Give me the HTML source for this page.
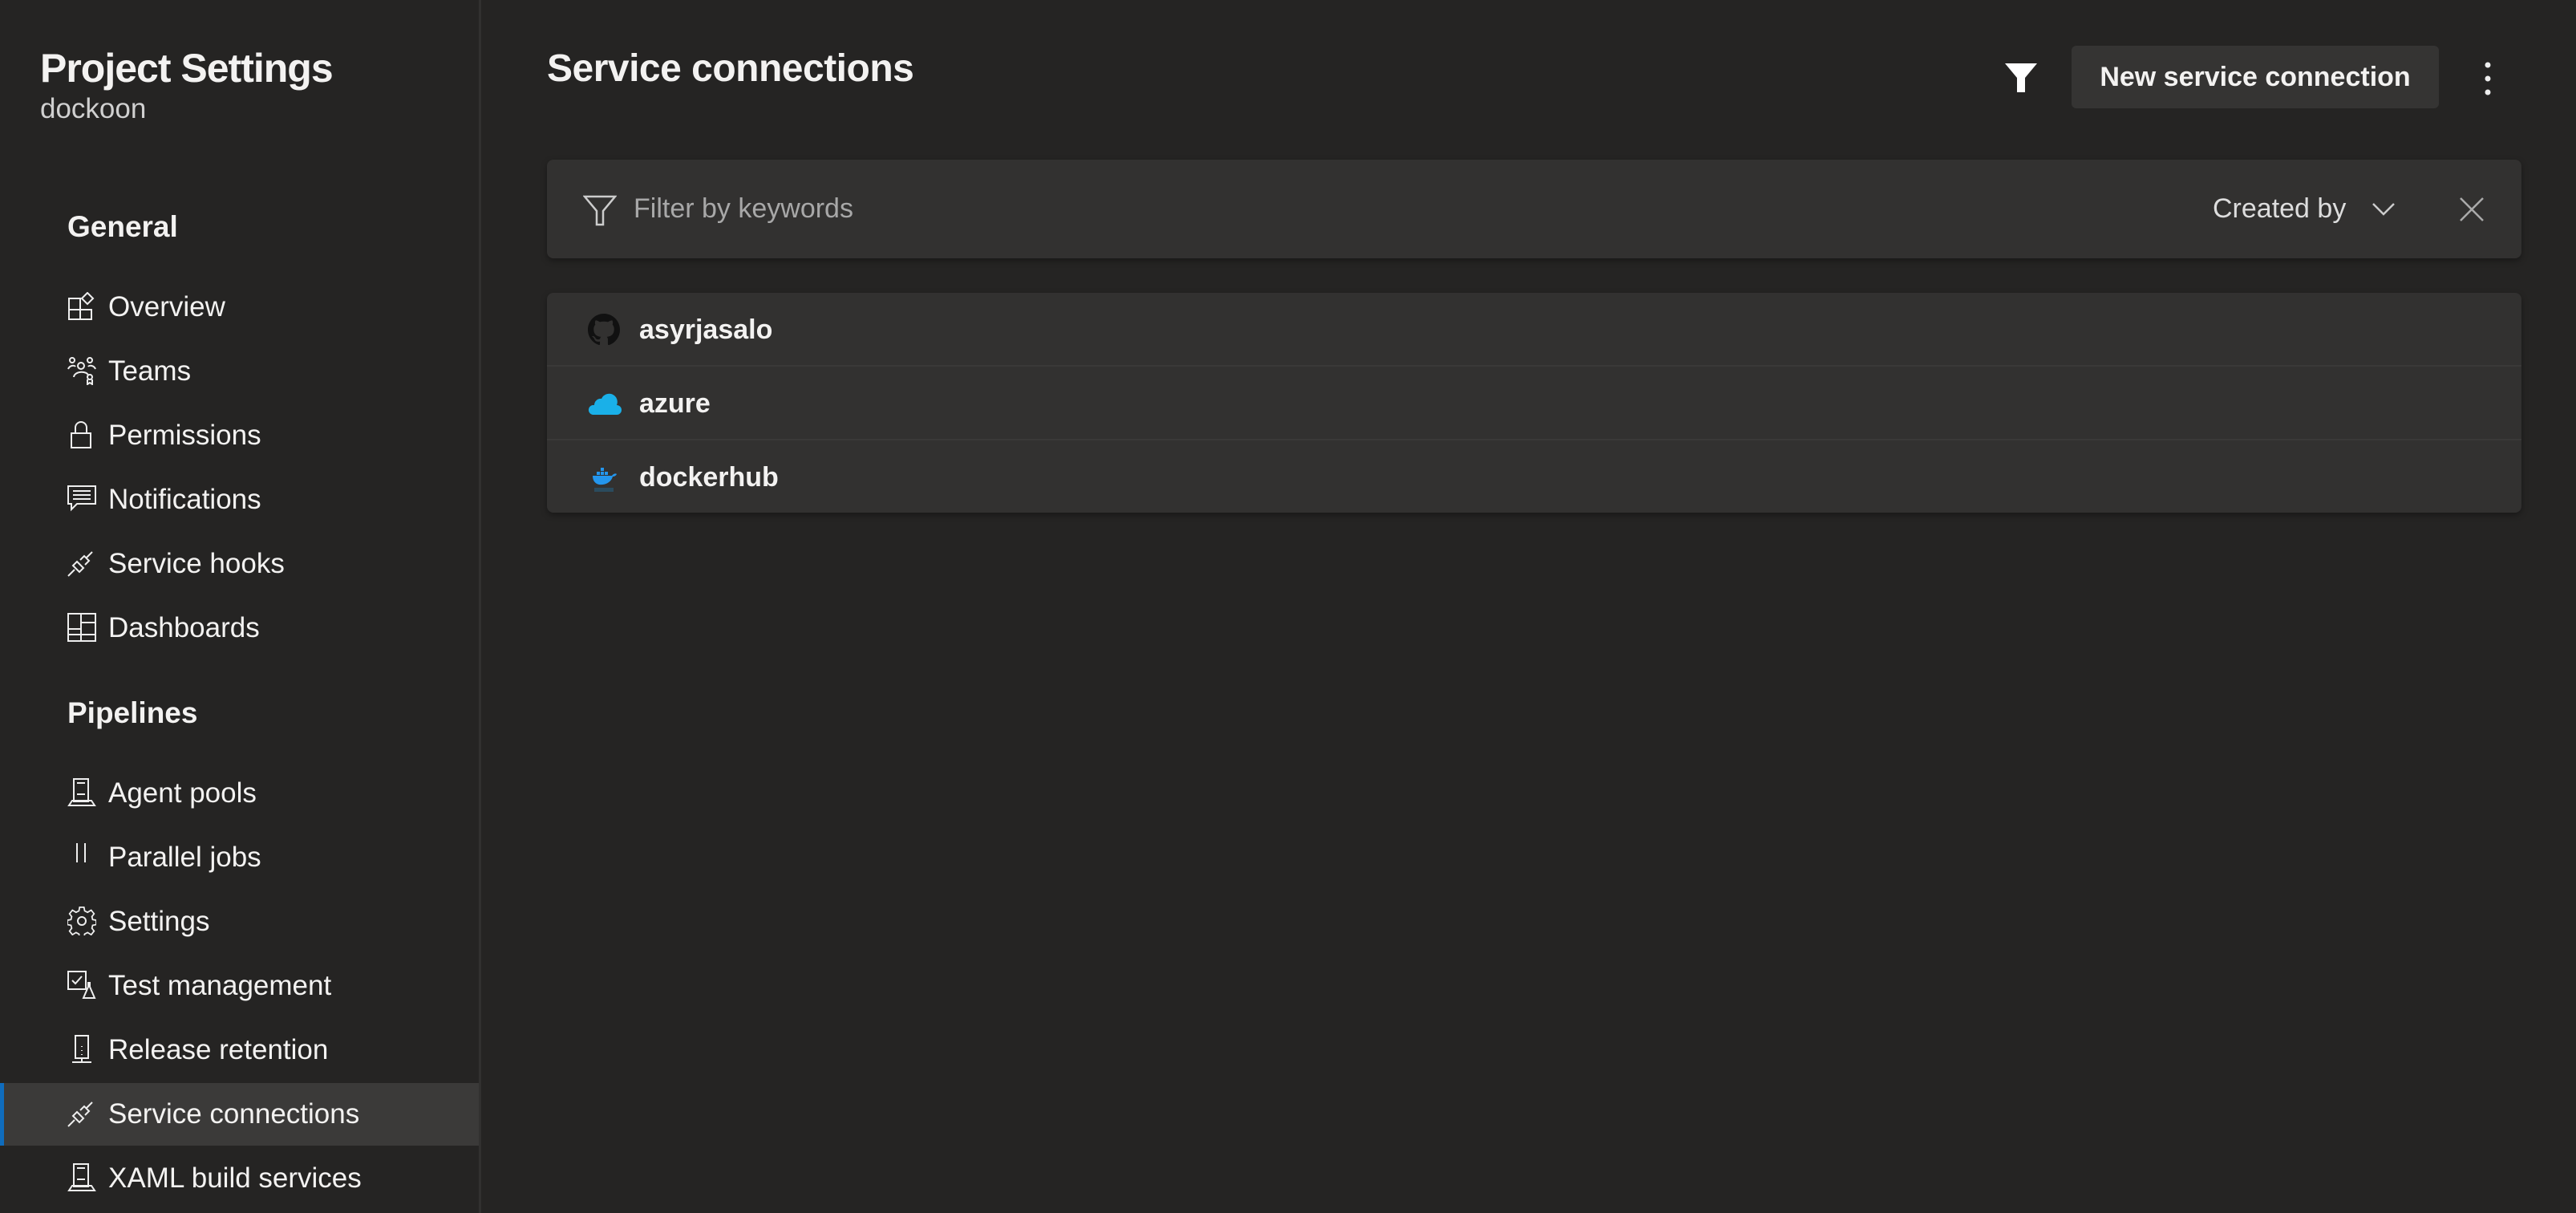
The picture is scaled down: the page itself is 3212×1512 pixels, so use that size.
<!DOCTYPE html>
<html><head><meta charset="utf-8"><style>
*{margin:0;padding:0;box-sizing:border-box}
body{width:3212px;height:1512px;background:#252423;font-family:"Liberation Sans",sans-serif;color:#f3f2f1;overflow:hidden;position:relative}
.abs{position:absolute}
.side{left:0;top:0;width:600px;height:1512px;border-right:3px solid #323130}
.h1{left:50px;top:56px;font-size:50px;font-weight:bold;letter-spacing:-1px}
.sub{left:50px;top:116px;font-size:35px;color:#d0d0d0}
.sec{left:84px;font-size:37px;font-weight:bold}
.item{left:0;width:597px;height:78px;font-size:35px;line-height:78px}
.item span{position:absolute;left:135px}
.item svg{position:absolute;left:84px;top:20px;width:36px;height:36px;fill:none;stroke:#eee;stroke-width:2}
.sel{background:#3b3a39}
.sel:before{content:"";position:absolute;left:0;top:0;width:5px;height:78px;background:#0f6cbd}
.title{left:682px;top:58px;font-size:48px;font-weight:bold;letter-spacing:-.5px}
.btn{left:2583px;top:57px;width:458px;height:78px;background:#353433;border-radius:6px;font-size:34px;font-weight:bold;line-height:78px;text-align:center}
.card{left:682px;width:2462px;background:#323130;border-radius:8px;box-shadow:0 3px 8px rgba(0,0,0,.35)}
.row{position:absolute;left:0;width:100%;height:92px;font-size:34px;font-weight:bold;line-height:92px}
.row span{position:absolute;left:115px}
</style></head><body>
<div class="abs side"></div>
<div class="abs h1">Project Settings</div>
<div class="abs sub">dockoon</div>
<div class="abs sec" style="top:262px">General</div>
<div class="abs item" style="top:344px"><svg viewBox="0 0 36 36"><path d="M2 8h14v14H2zM2 22h14v12H2zM16 22h14v12H16zM18 8l7-7 7 7-7 7z"/></svg><span>Overview</span></div>
<div class="abs item" style="top:424px"><svg viewBox="0 0 36 36"><circle cx="6" cy="5" r="3"/><circle cx="28" cy="5" r="3"/><circle cx="17" cy="12" r="4"/><path d="M1 16c2-5 8-5 9-3M35 16c-2-5-8-5-9-3M8 26c1-8 17-8 18-2"/><circle cx="28" cy="26" r="3"/><path d="M25 29v6l3-2 3 2v-6"/></svg><span>Teams</span></div>
<div class="abs item" style="top:504px"><svg viewBox="0 0 36 36"><path d="M5 16h24v18H5zM10 16V9a7 7 0 0114 0v7"/></svg><span>Permissions</span></div>
<div class="abs item" style="top:584px"><svg viewBox="0 0 36 36"><path d="M1 2h34v22H12l-7 7v-7H1zM7 8h22M7 13h22M7 18h22"/></svg><span>Notifications</span></div>
<div class="abs item" style="top:664px"><svg viewBox="0 0 36 36"><path d="M1 34l8-8M12 16l8 8-5 5-8-8zM16 14l5-5 6 6-5 5M24 11l7-7"/></svg><span>Service hooks</span></div>
<div class="abs item" style="top:744px"><svg viewBox="0 0 36 36"><path d="M1 1h34v34H1zM17 1v34M1 20h16M17 12h18M1 27h34"/></svg><span>Dashboards</span></div>
<div class="abs sec" style="top:868px">Pipelines</div>
<div class="abs item" style="top:950px"><svg viewBox="0 0 36 36"><path d="M8 1h18v28H8zM12 6h10M12 20h10M2 34h32l-4-6H6z"/></svg><span>Agent pools</span></div>
<div class="abs item" style="top:1030px"><svg viewBox="0 0 36 36"><path d="M12 1v24M22 1v24"/></svg><span>Parallel jobs</span></div>
<div class="abs item" style="top:1110px"><svg viewBox="0 0 36 36"><circle cx="18" cy="18" r="5"/><path d="M15 2h6l1 5 4 2 5-3 4 5-3 4 1 4 5 1v6l-5 1-1 4 3 4-4 5-5-3-4 2-1 5h-6l-1-5-4-2-5 3-4-5 3-4-1-4-5-1v-6l5-1 1-4-3-4 4-5 5 3 4-2z" transform="scale(.9) translate(2 -1)"/></svg><span>Settings</span></div>
<div class="abs item" style="top:1190px"><svg viewBox="0 0 36 36"><path d="M1 1h22v22H1zM6 12l4 4 8-9M26 14v6l-6 14h14l-6-14v-6"/></svg><span>Test management</span></div>
<div class="abs item" style="top:1270px"><svg viewBox="0 0 36 36"><path d="M10 1h16v28H10zM18 14v1M18 19v1M18 24v1M18 29v5M6 34h24"/></svg><span>Release retention</span></div>
<div class="abs item sel" style="top:1350px"><svg viewBox="0 0 36 36"><path d="M1 34l8-8M12 16l8 8-5 5-8-8zM16 14l5-5 6 6-5 5M24 11l7-7"/></svg><span>Service connections</span></div>
<div class="abs item" style="top:1430px"><svg viewBox="0 0 36 36"><path d="M8 1h18v28H8zM12 6h10M12 20h10M2 34h32l-4-6H6z"/></svg><span>XAML build services</span></div>

<div class="abs title">Service connections</div>
<svg class="abs" style="left:2498px;top:77px" width="44" height="40" viewBox="0 0 44 40"><path d="M2 2h40L27 20v18h-10V20z" fill="#fff"/></svg>
<div class="abs btn">New service connection</div>
<svg class="abs" style="left:3094px;top:76px" width="16" height="44"><circle cx="8" cy="5" r="3.5" fill="#eee"/><circle cx="8" cy="22" r="3.5" fill="#eee"/><circle cx="8" cy="39" r="3.5" fill="#eee"/></svg>

<div class="abs card" style="top:199px;height:123px">
<svg class="abs" style="left:45px;top:44px" width="42" height="40" viewBox="0 0 42 40"><path d="M2 2h38L25 20v17h-8V20z" fill="none" stroke="#ccc" stroke-width="2.5"/></svg>
<div class="abs" style="left:108px;top:42px;font-size:34px;color:#a8a8a8">Filter by keywords</div>
<div class="abs" style="left:2077px;top:42px;font-size:34px;color:#ddd">Created by</div>
<svg class="abs" style="left:2275px;top:52px" width="30" height="20"><path d="M2 3l13 13 13-13" fill="none" stroke="#ccc" stroke-width="2.5"/></svg>
<svg class="abs" style="left:2384px;top:46px" width="32" height="32"><path d="M2 2l28 28M30 2L2 30" stroke="#aaa" stroke-width="2.5"/></svg>
</div>

<div class="abs card" style="top:365px;height:274px">
<div class="row" style="top:0;border-bottom:2px solid #3a3938"><svg class="abs" style="left:51px;top:26px" width="40" height="40" viewBox="0 0 16 16"><path fill="#111" d="M8 0C3.580 0 0 3.58 0 8c0 3.54 2.29 6.530 5.470 7.590.4.07.55-.17.55-.38v-1.33c-2.23.48-2.7-1.07-2.7-1.07-.36-.92-.89-1.17-.89-1.17-.73-.5.05-.49.05-.49.8.06 1.23.83 1.23.83.71 1.23 1.87.87 2.33.66.07-.52.28-.87.5-1.07-1.78-.2-3.64-.89-3.64-3.95 0-.87.31-1.59.82-2.15-.08-.2-.36-1.02.08-2.12 0 0 .67-.21 2.2.82a7.6 7.6 0 014 0c1.53-1.04 2.2-.82 2.2-.82.44 1.1.16 1.92.08 2.12.51.56.82 1.27.82 2.15 0 3.07-1.87 3.75-3.65 3.95.29.25.54.73.54 1.48v2.2c0 .21.15.46.55.38A8.010 8.010 0 0016 8c0-4.42-3.58-8-8-8z"/></svg><span>asyrjasalo</span></div>
<div class="row" style="top:92px;border-bottom:2px solid #3a3938"><svg class="abs" style="left:51px;top:30px" width="42" height="32" viewBox="0 0 42 32"><path fill="#1ab0e8" d="M6 30h30a6 6 0 000-12 10 10 0 00-19-8A8 8 0 008 18a6 6 0 00-2 12z"/></svg><span>azure</span></div>
<div class="row" style="top:184px"><svg class="abs" style="left:54px;top:26px" width="34" height="40" viewBox="0 0 34 40"><path fill="#2496ed" d="M3 18h24c2-3 5-3 6-2-1 2-3 3-5 3-2 7-9 11-17 10-5-1-8-5-8-11z"/><rect x="8" y="13" width="4" height="4" fill="#2496ed"/><rect x="13" y="13" width="4" height="4" fill="#2496ed"/><rect x="13" y="8" width="4" height="4" fill="#2496ed"/><rect x="18" y="13" width="4" height="4" fill="#2496ed"/><rect x="5" y="33" width="24" height="5" fill="#2a4b5e"/></svg><span>dockerhub</span></div>
</div>
</body></html>
